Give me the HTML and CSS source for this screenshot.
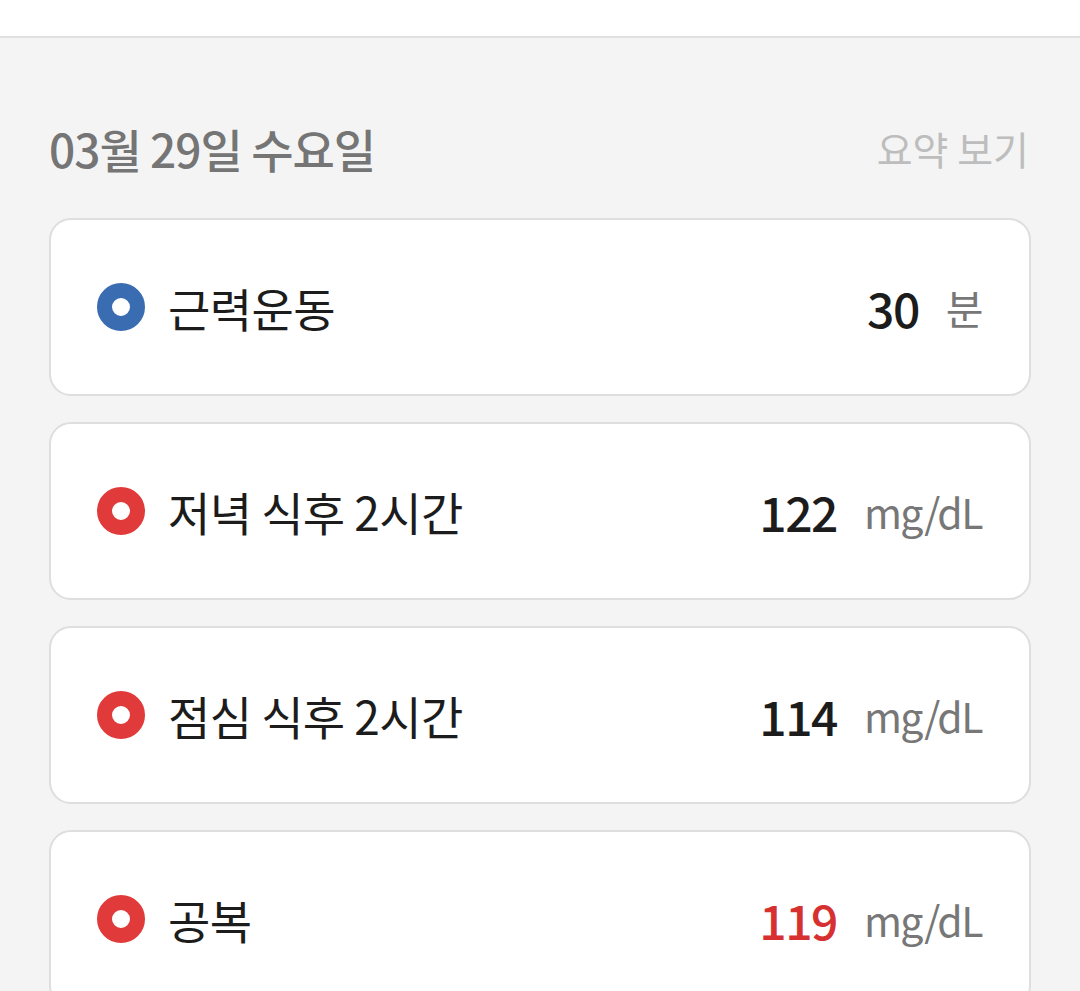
FILE: index.html
```html
<!DOCTYPE html>
<html>

<head>
    <meta content="text/html; charset=utf-8" http-equiv="Content-Type">
    <title>기록</title>

    <link rel="stylesheet" href="styles.css">
</head>

<body>

    <div class="topBar"></div>

    <div class="mainContainer">
        <div class="dayHeader">
            <span class="dayTitle">03월 29일 수요일</span>
            <span class="summaryLink">요약 보기</span>
        </div>

        <div class="recordList">
            <div class="recordCard">
                <span class="dot dotBlue"></span>
                <span class="recordName">근력운동</span>
                <span class="recordValue">30</span>
                <span class="recordUnit">분</span>
            </div>
            <div class="recordCard">
                <span class="dot dotRed"></span>
                <span class="recordName">저녁 식후 2시간</span>
                <span class="recordValue">122</span>
                <span class="recordUnit">mg/dL</span>
            </div>
            <div class="recordCard">
                <span class="dot dotRed"></span>
                <span class="recordName">점심 식후 2시간</span>
                <span class="recordValue">114</span>
                <span class="recordUnit">mg/dL</span>
            </div>
            <div class="recordCard">
                <span class="dot dotRed"></span>
                <span class="recordName">공복</span>
                <span class="recordValue valueHigh">119</span>
                <span class="recordUnit">mg/dL</span>
            </div>
        </div>
    </div>

</body>

</html>
```

FILE: styles.css
```css
html, body {
    margin: 0;
    padding: 0;
    background: #f4f4f4;
    font-family: "Noto Sans CJK KR", "Noto Sans", sans-serif;
    overflow: hidden;
}

.topBar {
    height: 36px;
    background: #ffffff;
    border-bottom: 2px solid #e0e0e0;
}

.mainContainer {
    padding: 0 49px;
}

.dayHeader {
    display: flex;
    justify-content: space-between;
    align-items: center;
    height: 64px;
    margin-top: 78px;
    margin-bottom: 38px;
}

.dayTitle {
    font-size: 46px;
    font-weight: 500;
    color: #757575;
    letter-spacing: -1px;
}

.summaryLink {
    font-size: 39px;
    color: #bdbdbd;
    letter-spacing: 0;
    margin-right: 2px;
}

.recordList {
    display: flex;
    flex-direction: column;
    gap: 26px;
}

.recordCard {
    display: flex;
    align-items: center;
    height: 174px;
    padding: 0 47px 0 46px;
    background: #ffffff;
    border: 2px solid #dedede;
    border-radius: 22px;
}

.dot {
    width: 18px;
    height: 18px;
    border-radius: 50%;
    border: 15px solid #3a6cb2;
    background: #ffffff;
    flex-shrink: 0;
}

.dotBlue {
    border-color: #3a6cb2;
}

.dotRed {
    border-color: #e03a3a;
}

.recordName {
    flex: 1;
    margin-left: 23px;
    font-size: 46px;
    color: #1c1c1c;
    letter-spacing: -0.6px;
}

.recordValue {
    font-size: 48px;
    font-weight: 500;
    color: #1c1c1c;
    letter-spacing: -1.5px;
}

.valueHigh {
    color: #d63030;
}

.recordUnit {
    margin-left: 27px;
    font-size: 41px;
    color: #777777;
    letter-spacing: -1.5px;
}
```
